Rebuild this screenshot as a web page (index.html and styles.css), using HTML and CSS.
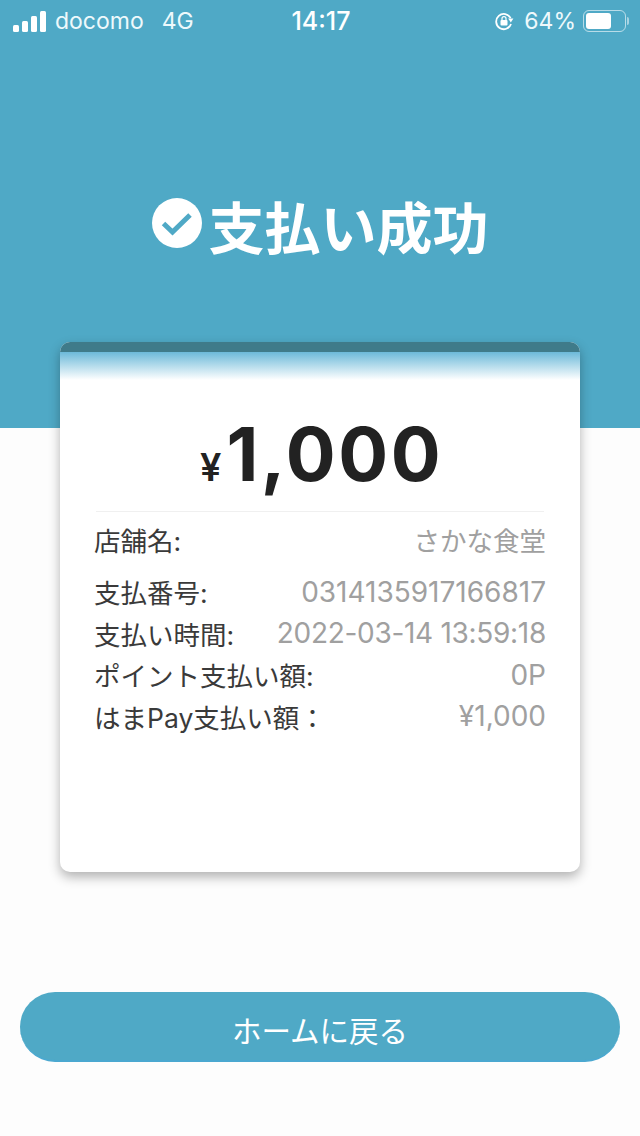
FILE: index.html
```html
<!DOCTYPE html>
<html lang="ja">
<head>
  <meta charset="UTF-8" />
  <meta name="viewport" content="width=device-width, initial-scale=1.0" />
  <title>支払い成功</title>
  <link rel="stylesheet" href="styles.css">
</head>
<body>
  <div class="page">
    <header class="hero">
      <!-- iOS status bar -->
      <div class="status-bar">
        <div class="status-left">
          <div class="signal">
            <span class="bar bar-1"></span>
            <span class="bar bar-2"></span>
            <span class="bar bar-3"></span>
            <span class="bar bar-4"></span>
          </div>
          <span class="carrier">docomo</span>
          <span class="network">4G</span>
        </div>
        <div class="status-time">14:17</div>
        <div class="status-right">
          <svg class="lock-icon" width="20" height="20" viewBox="0 0 20 20">
            <path d="M16.6 7.2A7.6 7.6 0 1 0 17 13" fill="none" stroke="#fff" stroke-width="1.8"/>
            <path d="M14.2 7.6L19.4 7.6L16.8 11.4Z" fill="#fff"/>
            <rect x="6.5" y="9" width="7" height="5.5" rx="1" fill="#fff"/>
            <path d="M8 9V7.6a2 2 0 0 1 4 0V9" fill="none" stroke="#fff" stroke-width="1.2"/>
          </svg>
          <span class="battery-text">64%</span>
          <div class="battery">
            <div class="battery-level"></div>
          </div>
          <div class="battery-cap"></div>
        </div>
      </div>
      <h1 class="title">
        <svg class="check-icon" width="50" height="50" viewBox="0 0 50 50">
          <circle cx="25" cy="25" r="25" fill="#fff"/>
          <path d="M11.5 25.5L20.5 34L38 17" fill="none" stroke="#4fa9c6" stroke-width="5"/>
        </svg>
        <span>支払い成功</span>
      </h1>
    </header>

    <main class="card">
      <div class="card-top"></div>
      <div class="amount"><span class="yen">¥</span>1,000</div>
      <div class="rows">
        <div class="row row-shop">
          <span class="label">店舗名:</span>
          <span class="value value-shop">さかな食堂</span>
        </div>
        <div class="row">
          <span class="label">支払番号:</span>
          <span class="value">0314135917166817</span>
        </div>
        <div class="row">
          <span class="label">支払い時間:</span>
          <span class="value value-time">2022-03-14 13:59:18</span>
        </div>
        <div class="row">
          <span class="label">ポイント支払い額:</span>
          <span class="value">0P</span>
        </div>
        <div class="row">
          <span class="label">はまPay支払い額：</span>
          <span class="value">¥1,000</span>
        </div>
      </div>
    </main>

    <button class="home-button" type="button">ホームに戻る</button>
  </div>
</body>
</html>
```

FILE: styles.css
```css
* {
  box-sizing: border-box;
}
body {
  margin: 0;
  background-color: #fdfdfd;
  font-family: Inter, "Noto Sans CJK JP", sans-serif;
}
.page {
  width: 640px;
  height: 1136px;
  overflow: hidden;
  display: flex;
  flex-direction: column;
}
.hero {
  height: 428px;
  flex-shrink: 0;
  background-color: #4fa9c6;
  color: white;
}
.status-bar {
  height: 42px;
  padding: 0 11px 0 13px;
  display: grid;
  grid-template-columns: 1fr auto 1fr;
  align-items: center;
  font-size: 23px;
  color: #eef9fc;
}
.status-left {
  display: flex;
  align-items: center;
}
.signal {
  display: flex;
  align-items: flex-end;
  gap: 3px;
  margin-right: 9px;
}
.bar {
  width: 6px;
  background: white;
  border-radius: 1.5px;
}
.bar-1 { height: 7px; }
.bar-2 { height: 11px; }
.bar-3 { height: 16px; }
.bar-4 { height: 21px; }
.network {
  margin-left: 18px;
}
.status-time {
  font-size: 25px;
  font-weight: 500;
  color: white;
}
.status-right {
  display: flex;
  align-items: center;
  justify-content: flex-end;
}
.battery-text {
  margin-left: 10px;
}
.battery {
  width: 43px;
  height: 22px;
  margin-left: 7px;
  padding: 2px;
  border: 1.5px solid rgba(255, 255, 255, 0.6);
  border-radius: 6px;
}
.battery-level {
  width: 25px;
  height: 100%;
  background: white;
  border-radius: 3px;
}
.battery-cap {
  width: 2px;
  height: 8px;
  margin-left: 1px;
  background: rgba(255, 255, 255, 0.5);
  border-radius: 0 2px 2px 0;
}
.title {
  margin: 154px 0 0;
  display: flex;
  justify-content: center;
  align-items: center;
  gap: 7px;
  font-size: 56px;
  font-weight: 700;
  line-height: 66px;
}
.check-icon {
  flex-shrink: 0;
  margin-top: -12px;
}
.card {
  height: 530px;
  margin: -86px 60px 0;
  background: white;
  border-radius: 10px;
  box-shadow: 0 5px 12px rgba(0, 0, 0, 0.3);
  overflow: hidden;
  flex-shrink: 0;
}
.card-top {
  height: 38px;
  border-top: 10px solid #3f7b8a;
  background: linear-gradient(#6cb9d9, #ffffff);
}
.amount {
  margin: 30px 36px 0;
  padding-left: 3px;
  border-bottom: 1px solid #f0f0f0;
  text-align: center;
  font-size: 74px;
  line-height: 88px;
  font-weight: 700;
  letter-spacing: 2.5px;
  color: #222;
}
.yen {
  font-size: 38px;
  font-weight: 600;
  letter-spacing: 0;
  margin-right: 5px;
}
.rows {
  padding: 6px 34px 0;
}
.row {
  display: flex;
  justify-content: space-between;
  height: 41.5px;
  align-items: center;
  font-size: 26.5px;
  color: #3a3a3a;
}
.row-shop {
  height: 43px;
  margin-bottom: 10px;
}
.value {
  color: #a0a0a0;
  font-size: 28px;
}
.value-shop {
  font-size: 26.5px;
}
.value-time {
  letter-spacing: -0.3px;
}
.home-button {
  width: 600px;
  height: 70px;
  margin: 120px 20px 0;
  padding-top: 6px;
  flex-shrink: 0;
  background-color: #4fa9c6;
  border: none;
  border-bottom: 2px solid #4ba8d0;
  border-radius: 35px;
  color: white;
  font-family: inherit;
  font-size: 29.5px;
  cursor: pointer;
}
```
